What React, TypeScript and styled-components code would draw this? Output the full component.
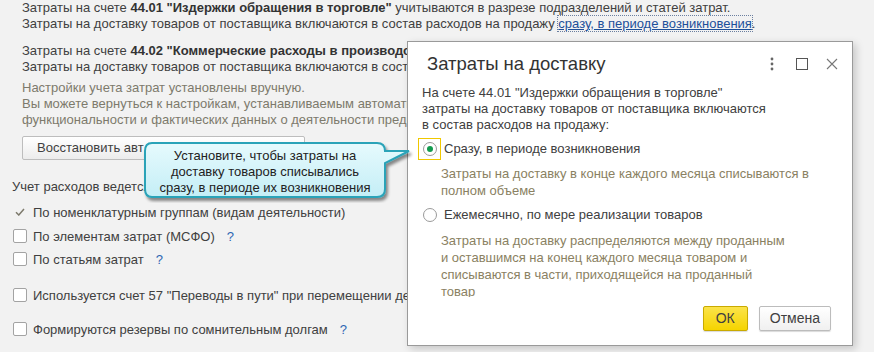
import React from 'react'
import styled, { createGlobalStyle } from 'styled-components'

const GlobalStyle = createGlobalStyle`
  html, body {
    margin: 0;
    padding: 0;
    background: #f2f2f2;
  }
  body {
    font-family: 'Liberation Sans', Arial, sans-serif;
    font-size: 13px;
    color: #404040;
  }
`

const Page = styled.div`
  position: relative;
  width: 874px;
  height: 352px;
  overflow: hidden;
  background: #f2f2f2;
  padding: 0 0 0 12px;
  box-sizing: border-box;
`

const Para = styled.div<{ $gap?: number; $muted?: boolean; $clip?: boolean }>`
  padding-left: 10px;
  margin-top: ${(p) => p.$gap ?? 0}px;
  line-height: 16px;
  white-space: nowrap;
  color: ${(p) => (p.$muted ? '#7d7a6c' : '#404040')};
  ${(p) => (p.$clip ? 'width: 385px; overflow: hidden;' : '')}
  b {
    color: #333;
  }
`

const InlineLink = styled.span`
  color: #1d4f9a;
  text-decoration: underline;
  text-decoration-color: #1d4f9a;
  outline: 1px dotted #6b7fa0;
`

const PlainButton = styled.div`
  margin: 8px 0 0 10px;
  width: 283px;
  height: 24px;
  box-sizing: border-box;
  border: 1px solid #bdbdbd;
  border-radius: 2px;
  background: linear-gradient(#ffffff, #ececec);
  line-height: 22px;
  padding-left: 14px;
  color: #404040;
  white-space: nowrap;
  overflow: hidden;
`

const Caption = styled.div`
  margin-top: 19px;
  line-height: 16px;
  white-space: nowrap;
`

const CheckRow = styled.div<{ $gap: number; $clip?: boolean }>`
  display: flex;
  align-items: center;
  gap: 6px;
  margin-top: ${(p) => p.$gap}px;
  height: 16px;
  white-space: nowrap;
  padding-left: 1px;
  ${(p) => (p.$clip ? 'width: 394px; overflow: hidden;' : '')}
`

const Box = styled.span`
  width: 14px;
  height: 14px;
  box-sizing: border-box;
  border: 1px solid #a3a3a3;
  border-radius: 2px;
  background: #fff;
  flex: none;
`

const Tick = styled.span`
  width: 14px;
  height: 14px;
  display: flex;
  align-items: center;
  justify-content: center;
  flex: none;
`

const Help = styled.span`
  color: #2f66b3;
  margin-left: 6px;
`

const Dialog = styled.div`
  position: absolute;
  left: 407px;
  top: 41px;
  width: 446px;
  height: 305px;
  box-sizing: border-box;
  background: #fff;
  border: 1px solid #9a9a9a;
  box-shadow: 3px 3px 8px rgba(0, 0, 0, 0.18);
  display: flex;
  flex-direction: column;
`

const DialogHeader = styled.div`
  height: 43px;
  display: flex;
  align-items: center;
  padding: 0 11px 0 19px;
`

const DialogTitle = styled.div`
  flex: 1;
  font-size: 18.5px;
  color: #333;
  white-space: nowrap;
`

const HeaderIcons = styled.div`
  display: flex;
  align-items: center;
  gap: 12px;
`

const IconSlot = styled.span`
  width: 18px;
  height: 18px;
  display: flex;
  align-items: center;
  justify-content: center;
`

const DialogBody = styled.div`
  height: 212px;
  overflow: hidden;
  padding: 0 14px;
  line-height: 16px;
  color: #404040;
`

const RadioRow = styled.div<{ $gap: number }>`
  display: flex;
  align-items: center;
  gap: 3px;
  margin: ${(p) => p.$gap}px 0 0 -4px;
  height: 22px;
  white-space: nowrap;
`

const RadioFocus = styled.span<{ $focused?: boolean }>`
  width: 23px;
  height: 22px;
  box-sizing: border-box;
  border: 1px solid ${(p) => (p.$focused ? '#f0c800' : 'transparent')};
  display: flex;
  align-items: center;
  justify-content: center;
  flex: none;
`

const RadioCircle = styled.span`
  width: 14px;
  height: 14px;
  box-sizing: border-box;
  border-radius: 50%;
  border: 1px solid #9a9a9a;
  background: #fff;
  display: flex;
  align-items: center;
  justify-content: center;
`

const RadioDot = styled.span`
  width: 6px;
  height: 6px;
  border-radius: 50%;
  background: #129b4e;
`

const Hint = styled.div<{ $gap: number }>`
  margin-top: ${(p) => p.$gap}px;
  padding-left: 19px;
  line-height: 17px;
  color: #8a8162;
`

const DialogFooter = styled.div`
  display: flex;
  justify-content: flex-end;
  gap: 11px;
  padding: 9px 21px 0 0;
`

const DlgButton = styled.div<{ $primary?: boolean }>`
  height: 25px;
  box-sizing: border-box;
  padding: 0 ${(p) => (p.$primary ? 12 : 10)}px;
  line-height: 23px;
  border-radius: 2px;
  border: 1px solid ${(p) => (p.$primary ? '#c9aa00' : '#bcbcbc')};
  background: ${(p) =>
    p.$primary ? 'linear-gradient(#fbe34a, #f5d400)' : 'linear-gradient(#ffffff, #f0f0f0)'};
  color: #404040;
  font-size: 14px;
  box-shadow: 0 1px 1px rgba(0, 0, 0, 0.15);
`

const Callout = styled.div`
  position: absolute;
  left: 143px;
  top: 141px;
  width: 272px;
  height: 62px;
`

const CalloutShape = styled.svg`
  position: absolute;
  inset: 0;
`

const CalloutText = styled.div`
  position: relative;
  width: 244px;
  padding-top: 7px;
  text-align: center;
  line-height: 16px;
  color: #222;
  font-size: 13px;
`

const App = () => {
  return (
    <>
      <GlobalStyle />
      <Page>
        <Para>
          Затраты на счете <b>44.01 "Издержки обращения в торговле"</b> учитываются в разрезе
          подразделений и статей затрат.
        </Para>
        <Para>
          Затраты на доставку товаров от поставщика включаются в состав расходов на продажу{' '}
          <InlineLink>сразу, в периоде возникновения</InlineLink>.
        </Para>
        <Para $gap={11} $clip>
          Затраты на счете <b>44.02 "Коммерческие расходы в производстве"</b>
        </Para>
        <Para $clip>Затраты на доставку товаров от поставщика включаются в состав</Para>
        <Para $gap={5} $muted $clip>
          Настройки учета затрат установлены вручную.
        </Para>
        <Para $muted $clip>
          Вы можете вернуться к настройкам, устанавливаемым автоматически
        </Para>
        <Para $muted $clip>
          функциональности и фактических данных о деятельности предприятия.
        </Para>
        <PlainButton>Восстановить авт</PlainButton>
        <Caption>Учет расходов ведется:</Caption>
        <CheckRow $gap={9}>
          <Tick>
            <svg width="10" height="8" viewBox="0 0 10 8">
              <path d="M1 4.2 L3.8 7 L9 1" fill="none" stroke="#7d7a6c" strokeWidth="1.5" />
            </svg>
          </Tick>
          По номенклатурным группам (видам деятельности)
        </CheckRow>
        <CheckRow $gap={8}>
          <Box />
          По элементам затрат (МСФО)
          <Help>?</Help>
        </CheckRow>
        <CheckRow $gap={7}>
          <Box />
          По статьям затрат
          <Help>?</Help>
        </CheckRow>
        <CheckRow $gap={20} $clip>
          <Box />
          Используется счет 57 "Переводы в пути" при перемещении денежных средств
        </CheckRow>
        <CheckRow $gap={18}>
          <Box />
          Формируются резервы по сомнительным долгам
          <Help>?</Help>
        </CheckRow>

        <Dialog>
          <DialogHeader>
            <DialogTitle>Затраты на доставку</DialogTitle>
            <HeaderIcons>
              <IconSlot>
                <svg width="4" height="14" viewBox="0 0 4 14">
                  <circle cx="2" cy="2" r="1.4" fill="#666" />
                  <circle cx="2" cy="7" r="1.4" fill="#666" />
                  <circle cx="2" cy="12" r="1.4" fill="#666" />
                </svg>
              </IconSlot>
              <IconSlot>
                <svg width="12" height="12" viewBox="0 0 12 12">
                  <rect x="0.5" y="0.5" width="11" height="11" fill="none" stroke="#555" />
                </svg>
              </IconSlot>
              <IconSlot>
                <svg width="12" height="12" viewBox="0 0 12 12">
                  <path d="M1 1 L11 11 M11 1 L1 11" stroke="#777" strokeWidth="1.1" />
                </svg>
              </IconSlot>
            </HeaderIcons>
          </DialogHeader>
          <DialogBody>
            <div>На счете 44.01 "Издержки обращения в торговле"</div>
            <div>затраты на доставку товаров от поставщика включаются</div>
            <div>в состав расходов на продажу:</div>
            <RadioRow $gap={5}>
              <RadioFocus $focused>
                <RadioCircle>
                  <RadioDot />
                </RadioCircle>
              </RadioFocus>
              Сразу, в периоде возникновения
            </RadioRow>
            <Hint $gap={5}>
              Затраты на доставку в конце каждого месяца списываются в
              <br />
              полном объеме
            </Hint>
            <RadioRow $gap={5}>
              <RadioFocus>
                <RadioCircle />
              </RadioFocus>
              Ежемесячно, по мере реализации товаров
            </RadioRow>
            <Hint $gap={6}>
              Затраты на доставку распределяются между проданным
              <br />
              и оставшимся на конец каждого месяца товаром и
              <br />
              списываются в части, приходящейся на проданный
              <br />
              товар
            </Hint>
          </DialogBody>
          <DialogFooter>
            <DlgButton $primary>ОК</DlgButton>
            <DlgButton>Отмена</DlgButton>
          </DialogFooter>
        </Dialog>

        <Callout>
          <CalloutShape width="272" height="62" viewBox="0 0 272 62">
            <defs>
              <linearGradient id="cg" x1="0" y1="0" x2="0" y2="1">
                <stop offset="0" stopColor="#e6fafd" />
                <stop offset="1" stopColor="#c4eef6" />
              </linearGradient>
              <filter id="cs" x="-10%" y="-10%" width="130%" height="140%">
                <feDropShadow dx="2" dy="3" stdDeviation="1.5" floodColor="#000" floodOpacity="0.45" />
              </filter>
            </defs>
            <path
              d="M9 2 H234 Q242 2 242 10 V10 L266 10 L242 22 V48 Q242 56 234 56 H9 Q2 56 2 48 V10 Q2 2 9 2 Z"
              fill="url(#cg)"
              stroke="#2aa3b8"
              strokeWidth="2"
              filter="url(#cs)"
            />
          </CalloutShape>
          <CalloutText>
            Установите, чтобы затраты на
            <br />
            доставку товаров списывались
            <br />
            сразу, в периоде их возникновения
          </CalloutText>
        </Callout>
      </Page>
    </>
  )
}

export default App
